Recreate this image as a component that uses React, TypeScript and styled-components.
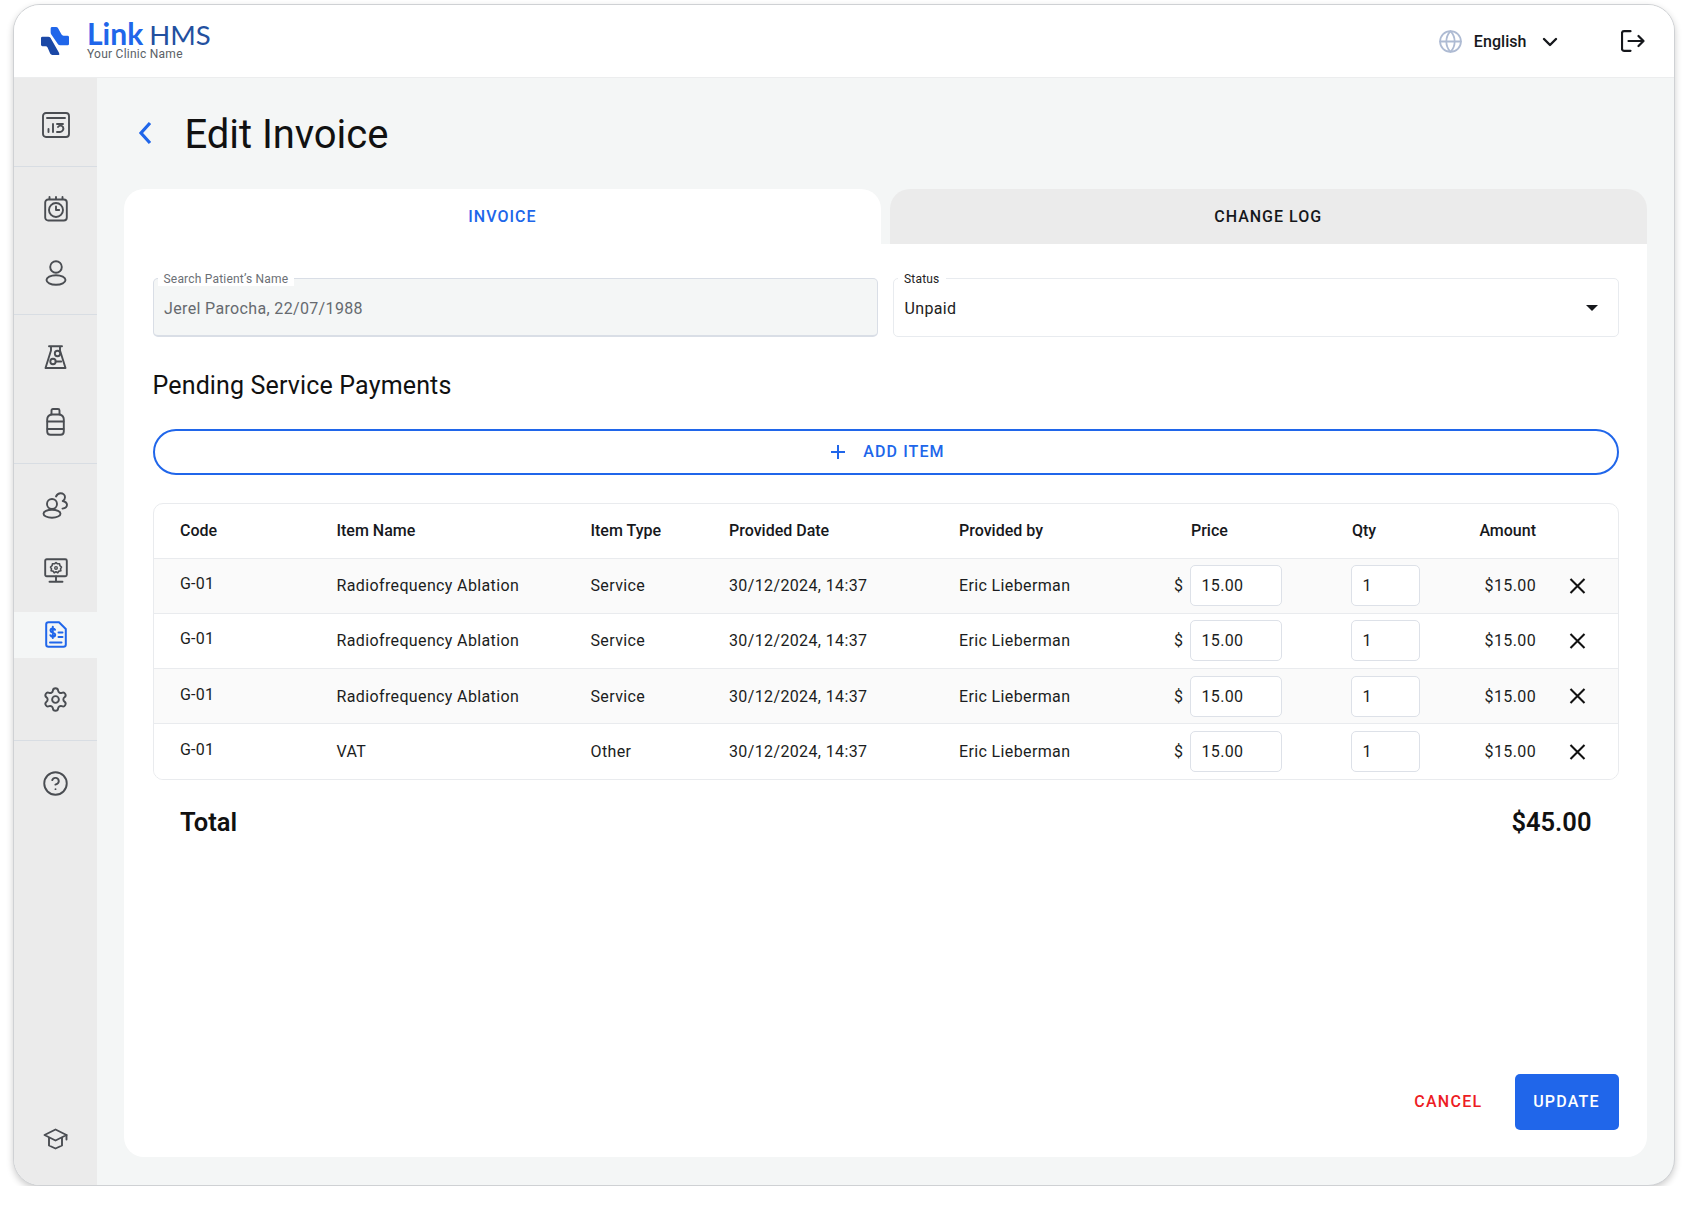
import React from 'react';
import styled, { createGlobalStyle } from 'styled-components';
import { ChevronDown, CircleHelp, Globe, Settings } from 'lucide-react';

const GlobalStyle = createGlobalStyle`
  html, body {
    margin: 0;
    padding: 0;
    background: #fff;
    font-family: Roboto, "Liberation Sans", sans-serif;
    color: #111;
  }
  * { box-sizing: border-box; }
`;

const blue = '#2066ea';
const line = '#e9ebee';
const columns = '26.5px 156.5px 254px 138.5px 230px 215px 16px 161px 69px 116px 1fr';

const Frame = styled.div`
  margin: 4px 13px 0;
  width: 1661.5px;
  height: 1181.5px;
  border: 1px solid #cfd1d4;
  border-radius: 27px;
  overflow: hidden;
  background: #f4f6f6;
  display: flex;
  flex-direction: column;
  box-shadow: 0 3px 7px rgba(0, 0, 0, 0.2);
`;

const TopBar = styled.header`
  height: 72.5px;
  flex: none;
  background: #fff;
  border-bottom: 1px solid #ecedee;
  display: flex;
  align-items: center;
  padding: 0 29px 0 27px;
`;

const Brand = styled.div`
  display: flex;
  align-items: center;
  gap: 18px;
  flex: 1;
`;

const BrandText = styled.div`
  display: flex;
  flex-direction: column;
  margin-top: -1px;
`;

const BrandName = styled.div`
  font-family: Lato, sans-serif;
  line-height: 27px;
  color: ${blue};
  display: flex;
  align-items: baseline;
  gap: 6px;
  b { font-size: 30px; font-weight: 700; }
  span { font-size: 27.5px; font-weight: 400; color: #23509f; }
`;

const ClinicName = styled.div`
  font-size: 12px;
  line-height: 12px;
  letter-spacing: 0.25px;
  color: #5b5f66;
`;

const Language = styled.div`
  display: flex;
  align-items: center;
  font-size: 16px;
  font-weight: 500;
  letter-spacing: 0.05px;
  color: #16181c;
  margin-top: 2px;
  svg:first-child { margin-right: 11px; }
  svg:last-child { margin-left: 11px; }
`;

const LogoutButton = styled.div`
  margin-left: 59px;
  margin-top: 1px;
  display: flex;
`;

const Middle = styled.div`
  flex: 1;
  display: flex;
  min-height: 0;
`;

const Rail = styled.nav`
  width: 83px;
  flex: none;
  background: #ebebeb;
  display: flex;
  flex-direction: column;
`;

const RailGroup = styled.div<{ $top?: number; $plain?: boolean }>`
  padding: ${(p) => p.$top ?? 19}px 0 18px;
  display: flex;
  flex-direction: column;
  gap: 18.5px;
  border-bottom: ${(p) => (p.$plain ? 'none' : '1px solid #d8dde3')};
`;

const RailFoot = styled.div`
  margin-top: auto;
  padding-bottom: 23px;
`;

const RailItem = styled.div<{ $active?: boolean }>`
  height: 46px;
  display: flex;
  align-items: center;
  justify-content: center;
  color: ${(p) => (p.$active ? blue : '#4a4d52')};
  background: ${(p) => (p.$active ? '#f4f6f6' : 'transparent')};
`;

const Main = styled.main`
  flex: 1;
  display: flex;
  flex-direction: column;
  padding: 0 27px 28px;
  min-width: 0;
`;

const TitleRow = styled.div`
  height: 111px;
  flex: none;
  display: flex;
  align-items: center;
  color: ${blue};
`;

const BackIcon = styled.svg`
  margin-left: 13.5px;
  margin-right: 33px;
`;

const PageTitle = styled.h1`
  margin: 3px 0 0;
  font-size: 40px;
  font-weight: 400;
  letter-spacing: -0.05px;
  color: #111;
`;

const Card = styled.section`
  flex: 1;
  display: flex;
  flex-direction: column;
  min-height: 0;
`;

const Tabs = styled.div`
  display: grid;
  grid-template-columns: 1fr 1fr;
  gap: 9px;
  height: 55px;
  flex: none;
`;

const Tab = styled.div<{ $active?: boolean }>`
  display: flex;
  align-items: center;
  justify-content: center;
  padding-top: 1px;
  font-size: 16px;
  font-weight: 500;
  letter-spacing: 1px;
  border-radius: 20px 20px 0 0;
  background: ${(p) => (p.$active ? '#fff' : '#ebebeb')};
  color: ${(p) => (p.$active ? blue : '#16181c')};
`;

const Body = styled.div`
  flex: 1;
  background: #fff;
  border-radius: 0 0 20px 20px;
  padding: 34px 28px 27px 28.5px;
  display: flex;
  flex-direction: column;
  min-height: 0;
`;

const Fields = styled.div`
  display: grid;
  grid-template-columns: 725.5px 1fr;
  gap: 15px;
`;

const Field = styled.div<{ $disabled?: boolean }>`
  position: relative;
  height: 59px;
  border: 1px solid ${(p) => (p.$disabled ? '#d9dee6' : '#e8ebef')};
  border-bottom-width: ${(p) => (p.$disabled ? 2 : 1)}px;
  border-radius: 5px;
  background: ${(p) => (p.$disabled ? '#f4f6f6' : '#fff')};
  display: flex;
  align-items: center;
  justify-content: space-between;
  padding: ${(p) => (p.$disabled ? 3 : 2)}px 20px 0 10.5px;
  font-size: 16px;
  letter-spacing: 0.35px;
  color: ${(p) => (p.$disabled ? '#666a6f' : '#222')};
`;

const FieldLabel = styled.label<{ $disabled?: boolean }>`
  position: absolute;
  top: -7px;
  left: 4px;
  padding: 0 6px;
  background: #fff;
  font-size: 12px;
  line-height: 14px;
  letter-spacing: 0.2px;
  color: ${(p) => (p.$disabled ? '#6b6f75' : '#222')};
`;

const Caret = styled.span`
  width: 0;
  height: 0;
  border-left: 6px solid transparent;
  border-right: 6px solid transparent;
  border-top: 6px solid #16181c;
`;

const SectionTitle = styled.h2`
  margin: 35px 0 0;
  font-size: 25px;
  line-height: 28px;
  letter-spacing: 0.15px;
  font-weight: 400;
  color: #111;
`;

const AddItem = styled.button`
  margin-top: 29px;
  height: 46px;
  flex: none;
  border: 2px solid ${blue};
  border-radius: 23px;
  background: #fff;
  color: ${blue};
  display: flex;
  align-items: center;
  justify-content: center;
  gap: 18px;
  padding: 0 0 0 5px;
  font-family: inherit;
  font-size: 16px;
  font-weight: 500;
  letter-spacing: 1.1px;
`;

const Table = styled.div`
  margin-top: 28px;
  border: 1px solid ${line};
  border-radius: 10px;
  overflow: hidden;
`;

const HeadRow = styled.div`
  display: grid;
  grid-template-columns: ${columns};
  align-items: center;
  height: 54px;
  font-size: 16px;
  font-weight: 500;
  color: #16181c;
`;

const NudgedHead = styled.div`
  margin-left: 1px;
`;

const Row = styled.div<{ $striped?: boolean }>`
  display: grid;
  grid-template-columns: ${columns};
  align-items: center;
  height: 55.33px;
  border-top: 1px solid ${line};
  background: ${(p) => (p.$striped ? '#fafafa' : '#fff')};
  font-size: 16px;
  letter-spacing: 0.37px;
  color: #1b1d21;
`;

const CodeCell = styled.div`
  grid-column: 2;
  margin-top: -4px;
  letter-spacing: 0.2px;
`;

const Amount = styled.div`
  text-align: right;
`;

const HeadAmount = styled(Amount)`
  letter-spacing: 0;
`;

const CellInput = styled.input<{ $w: number }>`
  width: ${(p) => p.$w}px;
  height: 41px;
  border: 1px solid #dde1e8;
  border-radius: 5px;
  padding: 0 0 0 10.5px;
  background: #fff;
  font-family: inherit;
  font-size: 16px;
  letter-spacing: 0.35px;
  color: #1b1d21;
  outline: none;
`;

const RemoveCell = styled.div`
  display: flex;
  justify-content: center;
  padding-left: 2px;
  color: #111;
`;

const TotalRow = styled.div`
  margin-top: 26px;
  padding: 0 27px 0 27.5px;
  display: flex;
  justify-content: space-between;
  font-size: 25.500px;
  line-height: 32px;
  font-weight: 600;
  color: #111;
`;

const Actions = styled.div`
  margin-top: auto;
  display: flex;
  justify-content: flex-end;
  align-items: center;
  gap: 32px;
`;

const CancelButton = styled.div`
  color: #ed1c24;
  font-size: 16px;
  font-weight: 500;
  letter-spacing: 1.3px;
`;

const UpdateButton = styled.div`
  width: 104px;
  height: 56px;
  border-radius: 5px;
  background: ${blue};
  color: #fff;
  display: flex;
  align-items: center;
  justify-content: center;
  font-size: 16px;
  font-weight: 500;
  letter-spacing: 1.2px;
`;

const Logo = () => (
  <svg width="28" height="28" viewBox="0 0 29 29">
    <path
      fill="#2066ea"
      d="M10 1.500Q10 0 11.500 0h4q1.600 0 2.200 1.200l3.600 6.600q.6 1.200 2 1.200h4.200q1.500 0 1.500 1.500v7q0 1.500-1.500 1.500h-7.600q-1.600 0-2.300-1.200L10.500 7.400Q10 6.600 10 5.500z"
    />
    <path
      fill="#1b48a6"
      d="M0 11.500Q0 10 1.500 10h6q1.600 0 2.300 1.200l8.400 14.600q.8 1.400.8 2.700 0 .5-.8.5h-6.400q-1.500 0-2.200-1.200l-2.800-6.600q-.6-1.200-2-1.200H1.500Q0 20 0 18.500z"
    />
  </svg>
);

const stroke = {
  fill: 'none',
  stroke: 'currentColor',
  strokeWidth: 1.9,
  strokeLinecap: 'round' as const,
  strokeLinejoin: 'round' as const,
};

const DashboardIcon = () => (
  <svg width="28" height="26" viewBox="0 0 28 26" {...stroke}>
    <rect x="1" y="1" width="26" height="24" rx="3" />
    <path d="M5 6h18M6.500 20v-3M11 20v-8M15 12h6M16 15a3 3 0 0 1 5 0 3.500 3.500 0 0 1-3 5h-3" />
  </svg>
);

const CalendarIcon = () => (
  <svg width="24" height="26" viewBox="0 0 24 26" {...stroke}>
    <rect x="1.200" y="3.500" width="21.600" height="21" rx="3" />
    <path d="M5.500 1v2M12 1v2M18.500 1v2" />
    <circle cx="12" cy="14" r="7" />
    <path d="M12 10.500V14h3.200" />
  </svg>
);

const PersonIcon = () => (
  <svg width="22" height="26" viewBox="0 0 22 26" {...stroke}>
    <circle cx="11" cy="7" r="5.800" />
    <path d="M11 15.200c5.500 0 9.500 2.300 9.500 4.800S16.500 24.800 11 24.800 1.500 22.500 1.500 20s4-4.800 9.500-4.800z" />
  </svg>
);

const FlaskIcon = () => (
  <svg width="23" height="25" viewBox="0 0 23 25" {...stroke}>
    <path d="M5 1.200h13M7 1.500v4L1.500 23h20L16 5.500v-4" />
    <circle cx="13.500" cy="8.500" r="2.700" />
    <circle cx="9" cy="16.500" r="2.700" />
    <path d="M11.700 16.500h5.500" />
  </svg>
);

const BottleIcon = () => (
  <svg width="19" height="28" viewBox="0 0 19 28" {...stroke}>
    <path d="M5.500 6.500V2.500q0-1.500 1.500-1.500h5q1.500 0 1.500 1.500v4" />
    <path d="M5 6.500h9q3.800 1.300 3.800 5v12q0 3.300-3.300 3.300h-10q-3.300 0-3.300-3.300v-12q0-3.700 3.800-5z" />
    <path d="M1.500 13.500h16M1.500 21h16" />
  </svg>
);

const PeopleIcon = () => (
  <svg width="27" height="27" viewBox="0 0 27 27" {...stroke}>
    <circle cx="10" cy="12" r="5" />
    <path d="M10 17.800c4.800 0 8.500 1.800 8.500 3.900s-3.700 4-8.500 4-8.500-1.900-8.500-4 3.700-3.900 8.500-3.900z" />
    <path d="M14 4.500C15 2.500 16.700 1.300 18.500 1.300c2.700 0 4.500 1.800 4.500 4 0 1.700-1 3-2.300 3.700 2.300.6 4.300 1.800 4.300 3.800 0 2-1.700 3.400-4.500 3.800" />
  </svg>
);

const MonitorIcon = () => (
  <svg width="24" height="25" viewBox="0 0 24 25" {...stroke}>
    <rect x="1.200" y="1.200" width="21.600" height="17" rx="1.500" />
    <path d="M12 18.500v5M5.500 23.800h13" />
    <path d="M12 4.500l1.500 1.300 2-.1.400 2 1.600 1.300-1 1.800.4 1.900-2 .4-1.100 1.700-1.800-1-1.800 1-1.100-1.700-2-.4.400-1.900-1-1.800 1.600-1.300.4-2 2 .1z" strokeWidth="1.600" />
    <circle cx="12" cy="9.900" r="1.300" strokeWidth="1.400" />
  </svg>
);

const InvoiceIcon = () => (
  <svg width="22" height="27" viewBox="0 0 22 27" {...stroke} strokeWidth={2}>
    <path d="M3.500 1.200h10.500l6.800 6.800v15.500q0 2.300-2.300 2.300h-15q-2.300 0-2.300-2.300V3.500q0-2.300 2.300-2.300z" />
    <path d="M5 21.500h11.500M13.500 11.500h4M13.500 16h4" />
    <path d="M10 8.800C9.500 7.800 8.700 7.400 7.800 7.400c-1.300 0-2.300.8-2.300 2 0 2.900 4.700 1.600 4.700 4.300 0 1.200-1 2-2.400 2-1 0-1.900-.5-2.400-1.500M7.800 5.800v11.300" />
  </svg>
);

const GradIcon = () => (
  <svg width="25" height="22" viewBox="0 0 25 22" {...stroke}>
    <path d="M12.500 1.500L23.500 7l-11 5.500L1.500 7z" />
    <path d="M6 10v7.500l6.500 3 6.500-3V10M23.500 7v4.500" />
  </svg>
);

const LogoutIcon = () => (
  <svg width="24" height="22" viewBox="0 0 24 22" fill="none" stroke="#16181c" strokeWidth="2.200" strokeLinecap="round" strokeLinejoin="round">
    <path d="M9.500 1.200H3q-2 0-2 2v15.600q0 2 2 2h6.500" />
    <path d="M7.500 11h15M17.500 6l5 5-5 5" />
  </svg>
);

const BackChevron = () => (
  <BackIcon width="14" height="24" viewBox="0 0 14 24" fill="none" stroke="currentColor" strokeWidth="3.200" strokeLinejoin="miter">
    <path d="M12 2L3 12l9 10" />
  </BackIcon>
);

const RemoveIcon = () => (
  <svg width="17" height="16" viewBox="0 0 17 16" fill="none" stroke="currentColor" strokeWidth="2.100">
    <path d="M1.500 1l14 14M15.500 1l-14 14" />
  </svg>
);

const PlusIcon = () => (
  <svg width="14" height="14" viewBox="0 0 14 14" fill="none" stroke="currentColor" strokeWidth="2">
    <path d="M7 0v14M0 7h14" />
  </svg>
);

const items = [
  { name: 'Radiofrequency Ablation', type: 'Service' },
  { name: 'Radiofrequency Ablation', type: 'Service' },
  { name: 'Radiofrequency Ablation', type: 'Service' },
  { name: 'VAT', type: 'Other' },
];

const App = (): JSX.Element => {
  return (
    <>
      <GlobalStyle />
      <Frame>
        <TopBar>
          <Brand>
            <Logo />
            <BrandText>
              <BrandName>
                <b>Link</b>
                <span>HMS</span>
              </BrandName>
              <ClinicName>Your Clinic Name</ClinicName>
            </BrandText>
          </Brand>
          <Language>
            <Globe size={25} color="#aebbd3" strokeWidth={1.7} />
            English
            <ChevronDown size={24} strokeWidth={2.4} />
          </Language>
          <LogoutButton>
            <LogoutIcon />
          </LogoutButton>
        </TopBar>
        <Middle>
          <Rail>
            <RailGroup $top={24}>
              <RailItem><DashboardIcon /></RailItem>
            </RailGroup>
            <RailGroup>
              <RailItem><CalendarIcon /></RailItem>
              <RailItem><PersonIcon /></RailItem>
            </RailGroup>
            <RailGroup>
              <RailItem><FlaskIcon /></RailItem>
              <RailItem><BottleIcon /></RailItem>
            </RailGroup>
            <RailGroup>
              <RailItem><PeopleIcon /></RailItem>
              <RailItem><MonitorIcon /></RailItem>
              <RailItem $active><InvoiceIcon /></RailItem>
              <RailItem><Settings size={27} strokeWidth={1.7} /></RailItem>
            </RailGroup>
            <RailGroup $plain>
              <RailItem><CircleHelp size={27} strokeWidth={1.7} /></RailItem>
            </RailGroup>
            <RailFoot>
              <RailItem><GradIcon /></RailItem>
            </RailFoot>
          </Rail>
          <Main>
            <TitleRow>
              <BackChevron />
              <PageTitle>Edit Invoice</PageTitle>
            </TitleRow>
            <Card>
              <Tabs>
                <Tab $active>INVOICE</Tab>
                <Tab>CHANGE LOG</Tab>
              </Tabs>
              <Body>
                <Fields>
                  <Field $disabled>
                    <FieldLabel $disabled>Search Patient’s Name</FieldLabel>
                    Jerel Parocha, 22/07/1988
                  </Field>
                  <Field>
                    <FieldLabel>Status</FieldLabel>
                    Unpaid
                    <Caret />
                  </Field>
                </Fields>
                <SectionTitle>Pending Service Payments</SectionTitle>
                <AddItem>
                  <PlusIcon />
                  ADD ITEM
                </AddItem>
                <Table>
                  <HeadRow>
                    <div />
                    <div>Code</div>
                    <div>Item Name</div>
                    <div>Item Type</div>
                    <div>Provided Date</div>
                    <div>Provided by</div>
                    <div />
                    <NudgedHead>Price</NudgedHead>
                    <NudgedHead>Qty</NudgedHead>
                    <HeadAmount>Amount</HeadAmount>
                    <div />
                  </HeadRow>
                  {items.map((item, i) => (
                    <Row key={i} $striped={i % 2 === 0}>
                      <CodeCell>G-01</CodeCell>
                      <div>{item.name}</div>
                      <div>{item.type}</div>
                      <div>30/12/2024, 14:37</div>
                      <div>Eric Lieberman</div>
                      <div>$</div>
                      <div><CellInput $w={92} defaultValue="15.00" /></div>
                      <div><CellInput $w={69} defaultValue="1" /></div>
                      <Amount>$15.00</Amount>
                      <RemoveCell><RemoveIcon /></RemoveCell>
                    </Row>
                  ))}
                </Table>
                <TotalRow>
                  <span>Total</span>
                  <span>$45.00</span>
                </TotalRow>
                <Actions>
                  <CancelButton>CANCEL</CancelButton>
                  <UpdateButton>UPDATE</UpdateButton>
                </Actions>
              </Body>
            </Card>
          </Main>
        </Middle>
      </Frame>
    </>
  );
};

export default App;
